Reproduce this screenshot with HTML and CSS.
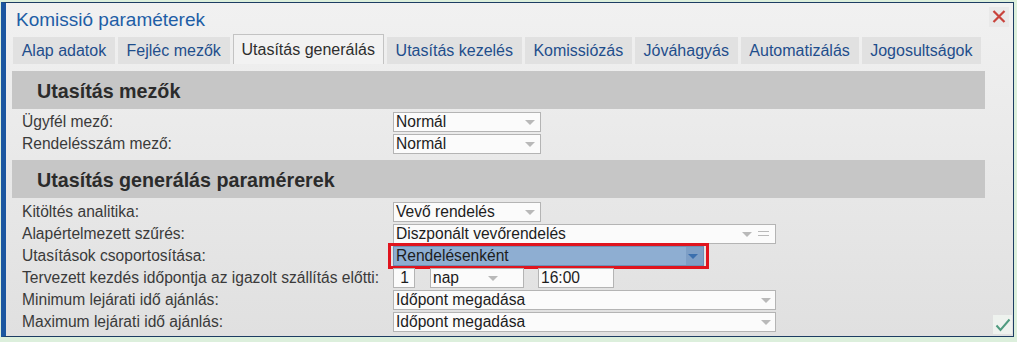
FILE: index.html
```html
<!DOCTYPE html>
<html lang="hu">
<head>
    <meta charset="UTF-8">
    <title>Komissió paraméterek</title>
    <link rel="stylesheet" href="styles.css">
</head>
<body>
    <div class="dialog">
        <div class="titlebar">
            <span class="title">Komissió paraméterek</span>
            <span class="close">
                <svg width="14" height="13" viewBox="0 0 14 13"><path d="M1.5 1 L12.5 12 M12.5 1 L1.5 12" stroke="#c9433c" stroke-width="2.2" fill="none"/></svg>
            </span>
        </div>

        <div class="tabs">
            <span class="tab">Alap adatok</span>
            <span class="tab">Fejléc mezők</span>
            <span class="tab active">Utasítás generálás</span>
            <span class="tab">Utasítás kezelés</span>
            <span class="tab">Komissiózás</span>
            <span class="tab">Jóváhagyás</span>
            <span class="tab">Automatizálás</span>
            <span class="tab">Jogosultságok</span>
        </div>

        <div class="section-head first">Utasítás mezők</div>
        <div class="row">
            <span class="label">Ügyfél mező:</span>
            <span class="select short">Normál<i class="arrow"></i></span>
        </div>
        <div class="row">
            <span class="label">Rendelésszám mező:</span>
            <span class="select short">Normál<i class="arrow"></i></span>
        </div>

        <div class="section-head second">Utasítás generálás paramérerek</div>
        <div class="row">
            <span class="label">Kitöltés analitika:</span>
            <span class="select short">Vevő rendelés<i class="arrow"></i></span>
        </div>
        <div class="row">
            <span class="label">Alapértelmezett szűrés:</span>
            <span class="select wide">Diszponált vevőrendelés<i class="arrow shifted"></i><i class="eq"></i></span>
        </div>
        <div class="row">
            <span class="label">Utasítások csoportosítása:</span>
            <span class="marked">
                <span class="select selected">Rendelésenként<i class="arrow"></i></span>
            </span>
        </div>
        <div class="row">
            <span class="label">Tervezett kezdés időpontja az igazolt szállítás előtti:</span>
            <span class="input num">1</span>
            <span class="select unit">nap<i class="arrow"></i></span>
            <span class="input time">16:00</span>
        </div>
        <div class="row">
            <span class="label">Minimum lejárati idő ajánlás:</span>
            <span class="select wide">Időpont megadása<i class="arrow"></i></span>
        </div>
        <div class="row">
            <span class="label">Maximum lejárati idő ajánlás:</span>
            <span class="select wide">Időpont megadása<i class="arrow"></i></span>
        </div>

        <span class="ok">
            <svg width="16" height="14" viewBox="0 0 16 14"><path d="M1.5 7.5 L5.5 12 L14.5 1.5" stroke="#4f9b7f" stroke-width="2" fill="none"/></svg>
        </span>
    </div>
</body>
</html>
```

FILE: styles.css
```css
body {
    margin: 0;
    background: #dcefdc;
    font-family: "Liberation Sans", Arial, sans-serif;
}

.dialog {
    position: relative;
    box-sizing: border-box;
    width: 1013px;
    height: 335px;
    margin: 2px 0 0 1px;
    border: 1px solid #1d3d63;
    border-left: 5px solid #1b56a0;
    background: linear-gradient(#f1f1f1, #e0e0e0);
}

/* Title */
.titlebar {
    display: flex;
    justify-content: space-between;
    align-items: center;
    height: 31px;
    padding: 0 4px 0 10px;
}

.title {
    font-size: 19px;
    color: #1e5ea6;
    padding-top: 2px;
}

.close {
    display: flex;
    align-items: center;
    justify-content: center;
    width: 20px;
    height: 20px;
    margin-top: -4px;
    background: #e9e9e9;
}

/* Tabs */
.tabs {
    display: flex;
    align-items: flex-end;
    gap: 3px;
    height: 30px;
    padding-left: 7px;
}

.tab {
    box-sizing: border-box;
    height: 27px;
    line-height: 27px;
    padding: 0 8.7px;
    font-size: 16px;
    color: #1f4e8c;
    background: #e1e1e1;
}

.tab.active {
    height: 30px;
    padding: 3px 8px 0;
    line-height: 24px;
    color: #2e2e2e;
    background: #f2f2f2;
    border: 1px solid #c3c3c3;
    border-bottom: none;
}

/* Section headers */
.section-head {
    height: 38px;
    line-height: 40px;
    margin-left: 6px;
    width: 973px;
    padding-left: 25px;
    box-sizing: border-box;
    font-size: 19.7px;
    font-weight: bold;
    color: #2b2b2b;
    background: #c6c6c6;
}

.section-head.first {
    margin-top: 7px;
    margin-bottom: 2px;
}

.section-head.second {
    margin-top: 5px;
    margin-bottom: 3px;
}

/* Rows */
.row {
    display: flex;
    align-items: center;
    height: 22px;
    padding-left: 16px;
    font-size: 15.6px;
}

.label {
    width: 371px;
    color: #3a3a3a;
}

.select,
.input {
    position: relative;
    box-sizing: border-box;
    height: 20px;
    line-height: 18px;
    padding-left: 2px;
    color: #1d1d1d;
    background: #fbfbfb;
    border: 1px solid #b4b4b4;
}

.select.short { width: 148px; }
.select.wide { width: 383px; }
.select.unit { width: 94px; margin-left: 15px; }

.input.num {
    width: 22px;
    text-align: right;
    padding-right: 5px;
}

.input.time {
    width: 76px;
    margin-left: 14px;
}

.arrow {
    position: absolute;
    right: 4px;
    top: 7px;
    border-left: 5px solid transparent;
    border-right: 5px solid transparent;
    border-top: 5px solid #b9b9b9;
}

.select.short .arrow { right: 5px; }
.select.unit .arrow { right: 25px; }
.arrow.shifted { right: 23px; }

.eq {
    position: absolute;
    right: 6px;
    top: 6px;
    width: 11px;
    height: 3px;
    border-top: 1px solid #b9b9b9;
    border-bottom: 1px solid #b9b9b9;
}

/* highlighted group select with red marker */
.marked {
    position: relative;
    display: flex;
}

.marked::after {
    content: "";
    position: absolute;
    inset: -3px -5px -3px -5px;
    border: 3px solid #e0141e;
}

.select.selected {
    width: 311px;
    background: linear-gradient(to right, #8eaed2 0, #8eaed2 292px, #7e9fc6 292px);
    border-color: #6f8fb5;
}

.select.selected .arrow {
    right: 5px;
    border-top-color: #3a6fae;
}

/* Accept button */
.ok {
    position: absolute;
    right: 1px;
    bottom: 2px;
    display: flex;
    align-items: center;
    justify-content: center;
    width: 19px;
    height: 19px;
    background: #eef2ee;
}
```
